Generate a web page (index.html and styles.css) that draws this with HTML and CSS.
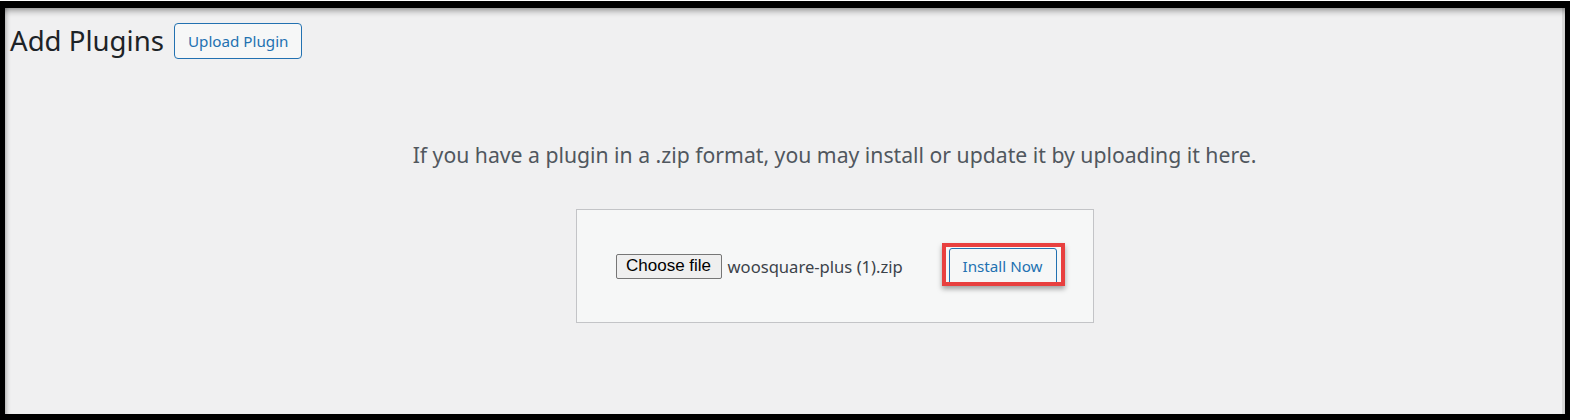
FILE: index.html
```html
<!DOCTYPE html>
<html lang="en">
<head>
    <meta charset="UTF-8">
    <title>Add Plugins</title>
    <link rel="stylesheet" href="styles.css">
</head>
<body>
    <div class="screen">
        <div class="wrap">
            <div class="title-row">
                <h1>Add Plugins</h1>
                <a class="page-title-action" href="#">Upload Plugin</a>
            </div>

            <div class="upload-plugin">
                <p class="install-help">If you have a plugin in a .zip format, you may install or update it by uploading it here.</p>

                <form class="upload-form">
                    <button type="button" class="choose-file">Choose file</button>
                    <span class="file-name">woosquare-plus (1).zip</span>
                    <span class="highlight">
                        <button type="button" class="button">Install Now</button>
                    </span>
                </form>
            </div>
        </div>
    </div>
</body>
</html>
```

FILE: styles.css
```css
* {
    box-sizing: border-box;
}

body {
    margin: 0;
    background: #fff;
    font-family: 'Noto Sans', 'Open Sans', sans-serif;
}

.screen {
    margin-top: 1px;
    height: 419px;
    border-style: solid;
    border-color: #000;
    border-width: 7px 5px 6px 5px;
    background: #f0f0f1;
    box-shadow: inset 0 7px 7px -5px rgba(0,0,0,0.45),
                inset 5px 0 5px -4px rgba(0,0,0,0.3),
                inset -3px 0 0 #dadada;
    overflow: hidden;
}

.wrap {
    padding: 14px 0 0 5px;
}

.title-row {
    display: flex;
    align-items: center;
    gap: 10px;
}

h1 {
    margin: 0;
    font-size: 27.6px;
    font-weight: 400;
    line-height: 37px;
    color: #1d2327;
}

.page-title-action {
    display: inline-block;
    height: 36px;
    line-height: 34px;
    padding: 0 13px;
    font-size: 15.2px;
    color: #2271b1;
    text-decoration: none;
    background: #f6f7f7;
    border: 1px solid #2271b1;
    border-radius: 4px;
}

.upload-plugin {
    padding-left: 94px;
    text-align: center;
}

.install-help {
    margin: 0;
    padding: 81px 0 39px;
    font-size: 21.2px;
    line-height: 30px;
    color: #50575e;
}

.upload-form {
    display: inline-flex;
    align-items: center;
    width: 518px;
    height: 114px;
    padding: 0 36px 0 39px;
    background: #f6f7f7;
    border: 1px solid #c3c4c7;
}

.choose-file {
    height: 25px;
    padding: 0 9.5px;
    font-family: 'Liberation Sans', Arial, sans-serif;
    font-size: 17px;
    color: #000;
    background: #efefef;
    border: 1px solid #767676;
    border-radius: 2px;
}

.file-name {
    margin-left: 6px;
    font-size: 16.6px;
    color: #3c434a;
}

.highlight {
    position: relative;
    margin-left: auto;
    display: inline-block;
}

.highlight::after {
    content: '';
    position: absolute;
    top: -5px;
    left: -7px;
    right: -8px;
    bottom: -1px;
    border: 4px solid #e8403f;
    box-shadow: 0 3px 5px rgba(0,0,0,0.35);
}

.button {
    display: block;
    height: 37px;
    padding: 0 13px;
    font-family: 'Noto Sans', 'Open Sans', sans-serif;
    font-size: 15.2px;
    color: #2271b1;
    background: #f6f7f7;
    border: 1px solid #2271b1;
    border-radius: 3px;
}
```
